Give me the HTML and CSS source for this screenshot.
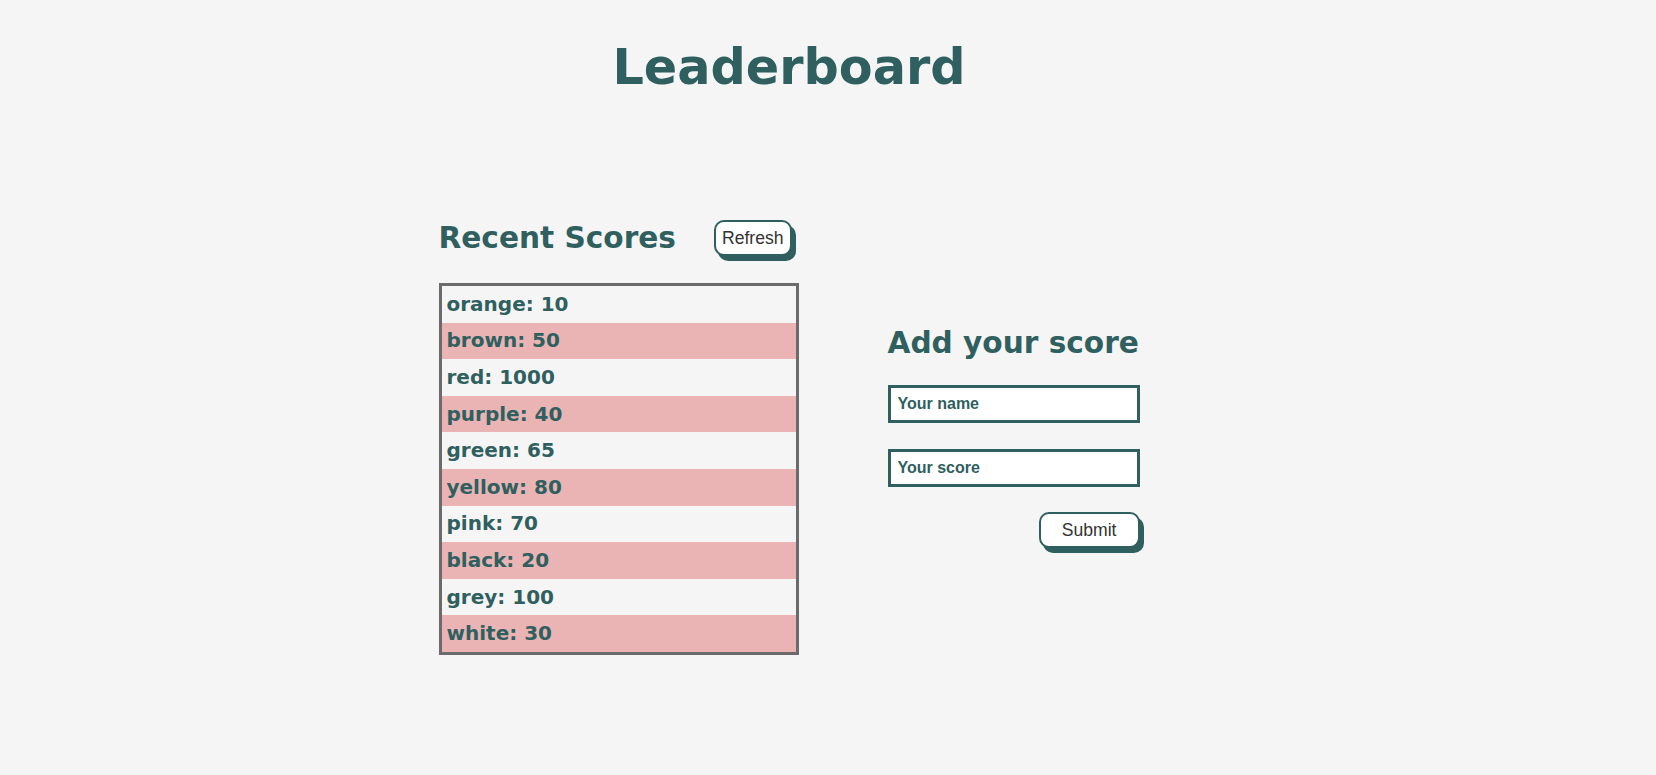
FILE: index.html
```html
<!DOCTYPE html>
<html lang="en">
<head>
<meta charset="utf-8">
<title>Leaderboard</title>
<link rel="stylesheet" href="styles.css">
</head>
<body>
<div class="page">
  <h1 class="title">Leaderboard</h1>
  <div class="board">
    <section class="recent">
      <div class="recent-head">
        <h2 class="heading">Recent Scores</h2>
        <button class="btn btn-refresh" type="button">Refresh</button>
      </div>
      <ul class="scores">
        <li class="score">orange: 10</li>
        <li class="score">brown: 50</li>
        <li class="score">red: 1000</li>
        <li class="score">purple: 40</li>
        <li class="score">green: 65</li>
        <li class="score">yellow: 80</li>
        <li class="score">pink: 70</li>
        <li class="score">black: 20</li>
        <li class="score">grey: 100</li>
        <li class="score">white: 30</li>
      </ul>
    </section>
    <form class="add-form">
      <h2 class="heading">Add your score</h2>
      <input class="field" type="text" placeholder="Your name">
      <input class="field" type="text" placeholder="Your score">
      <div class="actions">
        <button class="btn btn-submit" type="button">Submit</button>
      </div>
    </form>
  </div>
</div>
</body>
</html>
```
FILE: styles.css
```css
html, body {
  margin: 0;
  padding: 0;
  background: #f5f5f5;
}
body {
  font-family: "DejaVu Sans", Verdana, sans-serif;
  color: #2f5f5f;
}
.page {
  padding-right: 78px;
}
.title {
  margin: 0;
  padding-top: 38px;
  font-size: 49.3px;
  font-weight: bold;
  line-height: 58px;
  text-align: center;
}
.board {
  margin-top: 124px;
  display: flex;
  justify-content: center;
  align-items: center;
  gap: 89px;
}
.recent {
  display: flex;
  flex-direction: column;
}
.recent-head {
  display: flex;
  align-items: center;
  gap: 38px;
  margin-bottom: 27px;
}
.heading {
  margin: 0;
  font-size: 29.6px;
  font-weight: bold;
  line-height: 35px;
  white-space: nowrap;
}
.btn {
  font-family: "Liberation Sans", Arial, sans-serif;
  font-size: 17.6px;
  line-height: 20px;
  color: #333;
  background: #fff;
  border: 2px solid #2f5f5f;
  border-radius: 10px;
  box-shadow: 4px 5px 0 #2f5f5f;
  cursor: pointer;
}
.btn-refresh {
  padding: 6px;
}
.btn-submit {
  padding: 6px 21px;
}
.scores {
  list-style: none;
  margin: 0;
  padding: 0;
  width: 354px;
  border: 3px solid #6b6b6b;
}
.score {
  font-size: 20px;
  font-weight: bold;
  line-height: 23px;
  padding: 6.8px 5px;
}
.score:nth-child(even) {
  background: #eab4b4;
}
.add-form {
  display: flex;
  flex-direction: column;
  width: 252px;
}
.add-form .heading {
  margin-bottom: 24px;
}
.field {
  box-sizing: border-box;
  width: 252px;
  height: 38px;
  margin: 0 0 26px 0;
  padding: 0 7px;
  border: 3px solid #2f5f5f;
  background: #fff;
  font-family: "Liberation Sans", Arial, sans-serif;
  font-size: 16px;
  font-weight: bold;
  color: #2f5f5f;
  outline: none;
}
.field::placeholder {
  color: #2f5f5f;
  opacity: 1;
}
.actions {
  display: flex;
  justify-content: flex-end;
  margin-top: -1px;
}
```
